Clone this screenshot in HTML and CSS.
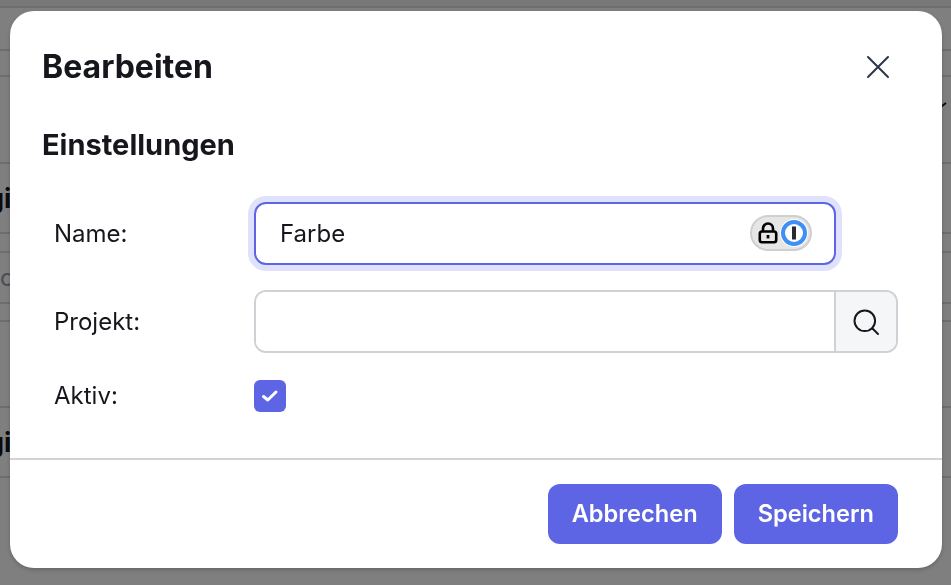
FILE: index.html
```html
<!DOCTYPE html>
<html lang="de">
<head>
    <meta charset="UTF-8">
    <meta name="viewport" content="width=device-width, initial-scale=1.0">
    <title>Bearbeiten</title>
    <link rel="stylesheet" href="styles.css">
</head>
<body>
<div class="page">
    <div class="page-top"></div>
    <div class="page-row row-head"></div>
    <div class="page-row row-a"></div>
    <div class="page-row row-b">
        <svg class="chevron" width="10" height="8" viewBox="0 0 10 8" fill="none" stroke="#16171c" stroke-width="2">
            <path d="M0 7 L8 1"/>
        </svg>
    </div>
    <div class="page-row row-c"><span class="page-title">gi</span></div>
    <div class="page-row row-d"></div>
    <div class="page-row row-e"><span class="page-text">c</span></div>
    <div class="page-row row-f"></div>
    <div class="page-row row-g"></div>
    <div class="page-row row-h"><span class="page-title">gi</span></div>
</div>

<div class="overlay"></div>

<div class="modal">
    <div class="modal-header">
        <h1>Bearbeiten</h1>
        <button class="close-button" aria-label="Schließen">
            <svg width="24" height="24" viewBox="0 0 24 24" fill="none" stroke="#2b3648" stroke-width="2" stroke-linecap="round">
                <path d="M2 2 L22 22 M22 2 L2 22"/>
            </svg>
        </button>
    </div>
    <div class="modal-body">
        <h2>Einstellungen</h2>
        <div class="form-row row-name">
            <label for="name">Name:</label>
            <div class="name-field">
                <input type="text" id="name" class="text-input" value="Farbe">
                <span class="pw-widget">
                    <svg class="pw-lock" width="20" height="22" viewBox="0 0 20 22" fill="none" stroke="#000" stroke-width="2.6">
                        <path d="M5 10 V6.5 a5 5 0 0 1 10 0 V10"/>
                        <rect x="1.8" y="9.5" width="16.4" height="10.7" rx="2.2"/>
                        <path d="M10 13 v3.4" stroke-width="2.8"/>
                    </svg>
                    <svg class="pw-logo" width="28" height="28" viewBox="0 0 28 28">
                        <circle cx="14" cy="14" r="14" fill="#fff"/>
                        <circle cx="14" cy="14" r="11" fill="none" stroke="#3f8ff5" stroke-width="4"/>
                        <rect x="12" y="7.5" width="4" height="13" fill="#2a2a2e"/>
                    </svg>
                </span>
            </div>
        </div>
        <div class="form-row row-project">
            <label for="project">Projekt:</label>
            <div class="search-field">
                <input type="text" id="project" class="search-input">
                <button class="search-button" aria-label="Suchen">
                    <svg width="28" height="28" viewBox="0 0 28 28" fill="none" stroke="#16181d" stroke-width="2" stroke-linecap="round">
                        <circle cx="12.8" cy="12.8" r="10.3"/>
                        <path d="M20.5 20.5 L26 26"/>
                    </svg>
                </button>
            </div>
        </div>
        <div class="form-row row-active">
            <label>Aktiv:</label>
            <span class="checkbox">
                <svg width="18" height="14" viewBox="0 0 18 14" fill="none" stroke="#fff" stroke-width="3" stroke-linecap="round" stroke-linejoin="round">
                    <path d="M2.5 7.5 L6.8 11 L15 3"/>
                </svg>
            </span>
        </div>
    </div>
    <div class="modal-footer">
        <button class="btn">Abbrechen</button>
        <button class="btn">Speichern</button>
    </div>
</div>
</body>
</html>
```
FILE: styles.css
```css
* {
    box-sizing: border-box;
}
html, body {
    margin: 0;
    padding: 0;
    height: 100%;
    overflow: hidden;
}
body {
    font-family: Inter, "Liberation Sans", sans-serif;
    color: #16171c;
    background-color: #fff;
}

/* page behind the dialog */
.page {
    height: 585px;
}
.page-top {
    height: 8px;
    background-color: #f0f0f2;
    border-bottom: 2px solid #ddd;
}
.page-row {
    display: flex;
    align-items: center;
    border-bottom: 2px solid #ddd;
    overflow: hidden;
}
.row-head { height: 43px; }
.row-a { height: 26px; }
.row-b { height: 87px; justify-content: flex-end; padding-right: 3px; }
.row-c { height: 70px; }
.row-d { height: 19px; }
.row-e { height: 51px; }
.row-f { height: 18px; }
.row-g { height: 86px; }
.row-h { height: 70px; }
.page-title {
    margin-left: -13px;
    font-size: 27px;
    font-weight: 700;
}
.page-text {
    font-size: 24px;
    color: #949aa8;
}
.chevron {
    align-self: flex-start;
    margin-top: 25px;
}

.overlay {
    position: fixed;
    top: 0;
    left: 0;
    width: 100%;
    height: 100%;
    background-color: rgba(0, 0, 0, 0.5);
}

.modal {
    position: fixed;
    top: 11px;
    left: 10px;
    width: 932px;
    height: 557px;
    background-color: #fff;
    border-radius: 24px;
    box-shadow: 0 2px 4px rgba(0, 0, 0, 0.2);
    display: flex;
    flex-direction: column;
}
.modal-header {
    display: flex;
    justify-content: space-between;
    align-items: center;
    padding: 32px 52px 0 32px;
    height: 80px;
}
h1 {
    margin: 0;
    font-size: 32px;
    line-height: 44px;
    font-weight: 700;
}
.close-button {
    display: flex;
    padding: 0;
    border: none;
    background: none;
}
.modal-body {
    flex: 1;
    padding: 0 44px 0 32px;
}
h2 {
    margin: 30px 0 0;
    font-size: 29px;
    line-height: 48px;
    font-weight: 700;
}
.form-row {
    display: grid;
    grid-template-columns: 200px 1fr;
    align-items: center;
    padding-left: 12px;
}
label {
    font-size: 24px;
    line-height: 32px;
}
.row-name { margin-top: 33px; }
.row-project { margin-top: 25px; }
.row-active { margin-top: 27px; }

.name-field {
    position: relative;
    width: 582px;
}
.text-input {
    display: block;
    width: 100%;
    height: 63px;
    padding: 0 24px;
    font-family: inherit;
    font-size: 24px;
    color: #16171c;
    background-color: #fff;
    border: 2px solid #5d65e5;
    border-radius: 12px;
    box-shadow: 0 0 0 6px #e0e1fa;
    outline: none;
}
.pw-widget {
    position: absolute;
    top: 13px;
    right: 24px;
    width: 62px;
    height: 36px;
    display: flex;
    align-items: center;
    justify-content: space-between;
    padding: 0 2px 0 6px;
    background-color: #e6e6e6;
    border: 2px solid #cfcfcf;
    border-radius: 18px;
}
.pw-lock, .pw-logo {
    display: block;
    flex: none;
}
.search-field {
    display: flex;
    height: 63px;
    border: 2px solid #cfd1d6;
    border-radius: 12px;
    overflow: hidden;
}
.search-input {
    flex: 1;
    min-width: 0;
    border: none;
    outline: none;
    font-family: inherit;
    font-size: 24px;
}
.search-button {
    width: 62px;
    display: flex;
    align-items: center;
    justify-content: center;
    padding: 0;
    background-color: #f5f6f8;
    border: none;
    border-left: 2px solid #cfd1d6;
}
.checkbox {
    width: 32px;
    height: 32px;
    display: flex;
    align-items: center;
    justify-content: center;
    background-color: #5d65e5;
    border-radius: 6px;
}
.modal-footer {
    display: flex;
    justify-content: flex-end;
    gap: 12px;
    padding: 24px 44px;
    border-top: 2px solid #d1d2d6;
}
.btn {
    height: 60px;
    padding: 0 24px 2px;
    font-family: inherit;
    font-size: 23.6px;
    font-weight: 600;
    color: #fff;
    background-color: #5d65e5;
    border: none;
    border-radius: 12px;
}
```
